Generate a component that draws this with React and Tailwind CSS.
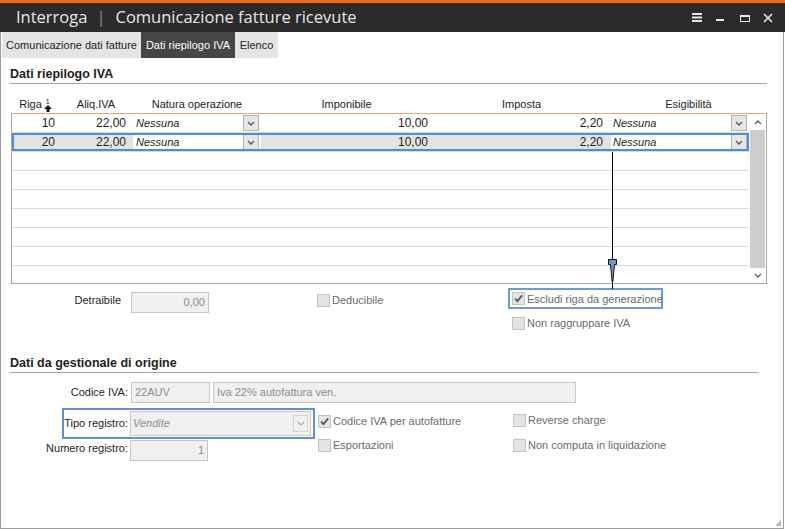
import React from 'react';

function Chevron({ up, color = '#555' }) {
    return (
        <svg width="8" height="5" viewBox="0 0 8 5">
            <path d={up ? 'M1 4l3-3 3 3' : 'M1 1l3 3 3-3'} fill="none" stroke={color} strokeWidth="1.3" />
        </svg>
    );
}

function DropButton() {
    return (
        <span className="w-[16px] h-[16px] border border-[#b4b4b4] bg-[#e6e6e6] flex items-center justify-center">
            <Chevron />
        </span>
    );
}

function Check({ checked, label }) {
    return (
        <div className="flex items-center h-[14px] whitespace-nowrap">
            <span className="w-[13px] h-[13px] shrink-0 border border-[#c4c4c4] bg-[#e4e4e4] flex items-center justify-center">
                {checked &&
                    <svg width="11" height="11" viewBox="0 0 11 11">
                        <path d="M2 5.5l2.4 2.6L9.2 2.4" fill="none" stroke="#555" strokeWidth="1.8" />
                    </svg>
                }
            </span>
            <span className="ml-[2px] text-[#6b6b6b] leading-[14px]">{label}</span>
        </div>
    );
}

function Field({ value, w, right, italic }) {
    return (
        <div className={`${w} h-[21px] border border-[#c6c6c6] bg-[#f0f0f0] text-[#8c8c8c] flex items-center px-[3px] ${right ? 'justify-end' : ''} ${italic ? 'italic' : ''}`}>
            {value}
        </div>
    );
}

function DataRow({ riga, selected }) {
    const grey = selected ? 'bg-[#e3e3e3]' : 'bg-white';
    return (
        <div className={`relative flex h-[19px] border-b border-[#dadada] text-[12px] leading-[18px] text-[#1e1e1e] ${selected ? 'after:absolute after:inset-0 after:border-2 after:border-[#4a8fdd] after:pointer-events-none' : ''}`}>
            <div className={`w-[47px] text-right pr-[4px] ${grey}`}>{riga}</div>
            <div className={`w-[74px] text-right pr-[7px] ${grey}`}>22,00</div>
            <div className="w-[128px] flex items-center justify-between pl-[3px] pr-[2px] bg-white">
                <span className="italic text-[11px]">Nessuna</span>
                <DropButton />
            </div>
            <div className={`w-[171px] text-right pr-[4px] ${grey}`}>10,00</div>
            <div className={`w-[179px] text-right pr-[8px] ${grey}`}>2,20</div>
            <div className="flex-1 flex items-center justify-between pl-[2px] pr-[2px] bg-white">
                <span className="italic text-[11px]">Nessuna</span>
                <DropButton />
            </div>
        </div>
    );
}

function EmptyRow() {
    return <div className="h-[19px] border-b border-[#dadada] shrink-0" />;
}

export default function App() {
    return (
        <div className="relative w-[785px] h-[529px] bg-white flex flex-col overflow-hidden font-['Liberation_Sans',Arial,sans-serif] text-[11px] text-[#1e1e1e]">
            <div className="h-[3px] bg-[#f26a16] shrink-0" />

            {/* title bar */}
            <div className="h-[29px] bg-[#2b2b2b] flex items-center pl-[16px] pr-[12px] shrink-0 font-['Open_Sans',sans-serif] text-[16.5px] text-[#e8e8e8]">
                <span>Interroga</span>
                <span className="ml-[9px] text-[#8d8d8d]">|</span>
                <span className="ml-[10px]">Comunicazione fatture ricevute</span>
                <div className="ml-auto flex items-center">
                    <svg width="10" height="9" viewBox="0 0 10 9">
                        <rect x="0" y="0" width="10" height="2" fill="#e8e8e8" />
                        <rect x="0" y="3.5" width="10" height="2" fill="#e8e8e8" />
                        <rect x="0" y="7" width="10" height="2" fill="#e8e8e8" />
                    </svg>
                    <svg className="ml-[14px] mt-[6px]" width="8" height="3" viewBox="0 0 8 3">
                        <rect x="0" y="0" width="8" height="2" fill="#e8e8e8" />
                    </svg>
                    <svg className="ml-[16px] mt-[1px]" width="10" height="7" viewBox="0 0 10 7">
                        <rect x="0.5" y="1" width="9" height="5.5" fill="none" stroke="#e8e8e8" strokeWidth="1" />
                        <rect x="0" y="0" width="10" height="2" fill="#e8e8e8" />
                    </svg>
                    <svg className="ml-[13px]" width="10" height="10" viewBox="0 0 10 10">
                        <path d="M1 1l8 8M9 1l-8 8" stroke="#e8e8e8" strokeWidth="1.6" />
                    </svg>
                </div>
            </div>

            <div className="flex-1 flex flex-col border-l border-r border-b border-[#9c9c9c] w-[784px]">
                {/* tabs */}
                <div className="flex h-[26px] pl-[1px] shrink-0">
                    <div className="w-[139px] bg-[#e4e4e4] flex items-center justify-center">Comunicazione dati fatture</div>
                    <div className="w-[94px] bg-[#464646] text-white flex items-center justify-center">Dati riepilogo IVA</div>
                    <div className="w-[43px] bg-[#e4e4e4] flex items-center justify-center">Elenco</div>
                </div>

                {/* Dati riepilogo IVA */}
                <div className="ml-[9px] mt-[7px] w-[757px] h-[19px] pt-[2px] border-b border-[#a4a4a4] text-[12.5px] font-bold leading-[15px] shrink-0">
                    Dati riepilogo IVA
                </div>

                <div className="ml-[11px] h-[29px] flex items-end pb-[1px] shrink-0">
                    <div className="w-[47px] flex items-end justify-center">
                        <span>Riga</span>
                        <span className="ml-[2px] flex flex-col items-center">
                            <span className="text-[7px] leading-[7px]">1</span>
                            <svg width="8" height="7" viewBox="0 0 8 7">
                                <path d="M4 0L8 4H5.5V7H2.5V4H0Z" fill="#111" />
                            </svg>
                        </span>
                    </div>
                    <div className="w-[74px] text-center">Aliq.IVA</div>
                    <div className="w-[128px] text-center">Natura operazione</div>
                    <div className="w-[171px] text-center">Imponibile</div>
                    <div className="w-[179px] text-center">Imposta</div>
                    <div className="w-[155px] text-center">Esigibilità</div>
                </div>

                <div className="ml-[10px] w-[756px] h-[171px] border border-[#a8a8a8] border-t-[#e9a772] flex overflow-hidden shrink-0">
                    <div className="flex-1 flex flex-col overflow-hidden">
                        <DataRow riga="10" />
                        <DataRow riga="20" selected />
                        <EmptyRow />
                        <EmptyRow />
                        <EmptyRow />
                        <EmptyRow />
                        <EmptyRow />
                        <EmptyRow />
                        <EmptyRow />
                    </div>
                    <div className="w-[17px] flex flex-col bg-white">
                        <div className="h-[16px] flex items-center justify-center"><Chevron up color="#606060" /></div>
                        <div className="flex-1 mx-[1px] bg-[#cdcdcd]" />
                        <div className="h-[15px] flex items-center justify-center"><Chevron color="#606060" /></div>
                    </div>
                </div>

                {/* detraibile row */}
                <div className="flex items-start mt-[4px] h-[24px] shrink-0">
                    <div className="w-[120px] mt-[3px] h-[20px] leading-[19px] text-right">Detraibile</div>
                    <div className="ml-[10px] mt-[4px]"><Field value="0,00" w="w-[78px]" right /></div>
                    <div className="ml-[108px] w-[191px] mt-[5px]"><Check label="Deducibile" /></div>
                    <div className="w-[155px] h-[21px] border-2 border-[#6d99df] flex items-center pl-[2px]">
                        <Check checked label="Escludi riga da generazione" />
                    </div>
                </div>
                <div className="ml-[511px] mt-[4px] h-[14px] shrink-0">
                    <Check label="Non raggruppare IVA" />
                </div>

                {/* Dati da gestionale di origine */}
                <div className="ml-[9px] mt-[24px] w-[748px] h-[19px] pt-[2px] border-b border-[#a4a4a4] text-[12.5px] font-bold leading-[15px] shrink-0">
                    Dati da gestionale di origine
                </div>

                <div className="flex items-center mt-[9px] h-[21px] shrink-0">
                    <div className="w-[127px] text-right">Codice IVA:</div>
                    <div className="ml-[3px]"><Field value="22AUV" w="w-[79px]" /></div>
                    <div className="ml-[3px]"><Field value="Iva 22% autofattura ven." w="w-[363px]" /></div>
                </div>

                <div className="flex items-start mt-[5px] h-[31px] shrink-0">
                    <div className="ml-[61px] w-[253px] h-[31px] border-2 border-[#5f8fda] flex items-center">
                        <div className="w-[64px] text-right">Tipo registro:</div>
                        <div className="ml-[2px] w-[181px] h-[25px] border border-[#c8c8c8] bg-[#f0f0f0] flex items-center justify-between pl-[2px] pr-[2px]">
                            <span className="italic text-[#8c8c8c]">Vendite</span>
                            <span className="w-[15px] h-[17px] border border-[#d4d4d4] flex items-center justify-center">
                                <Chevron color="#b0b0b0" />
                            </span>
                        </div>
                    </div>
                    <div className="ml-[3px] w-[195px] mt-[6px]"><Check checked label="Codice IVA per autofatture" /></div>
                    <div className="mt-[5px]"><Check label="Reverse charge" /></div>
                </div>

                <div className="flex items-start h-[21px] shrink-0">
                    <div className="w-[127px] h-[20px] leading-[18px] text-right">Numero registro:</div>
                    <div className="ml-[2px] mt-[1px]"><Field value="1" w="w-[78px]" right /></div>
                    <div className="ml-[110px] w-[195px] mt-[-1px]"><Check label="Esportazioni" /></div>
                    <div className="mt-[-1px]"><Check label="Non computa in liquidazione" /></div>
                </div>

                <div className="flex-1 flex items-end justify-end pr-[1px] pb-[1px]">
                    <svg width="8" height="8" viewBox="0 0 8 8">
                        <path d="M7 1v6H1z" fill="#b5b5b5" />
                    </svg>
                </div>
            </div>

            {/* annotation arrow */}
            <div className="absolute left-[612px] top-[152px] w-[1px] h-[137px] bg-black" />
            <svg className="absolute left-[607px] top-[259px]" width="11" height="25" viewBox="0 0 11 25">
                <path d="M1.5 0.5H9.5V5.5H7.5L5.8 23H5.2L3.5 5.5H1.5Z" fill="#6f95d9" stroke="#111" strokeWidth="1" />
            </svg>
        </div>
    );
}
